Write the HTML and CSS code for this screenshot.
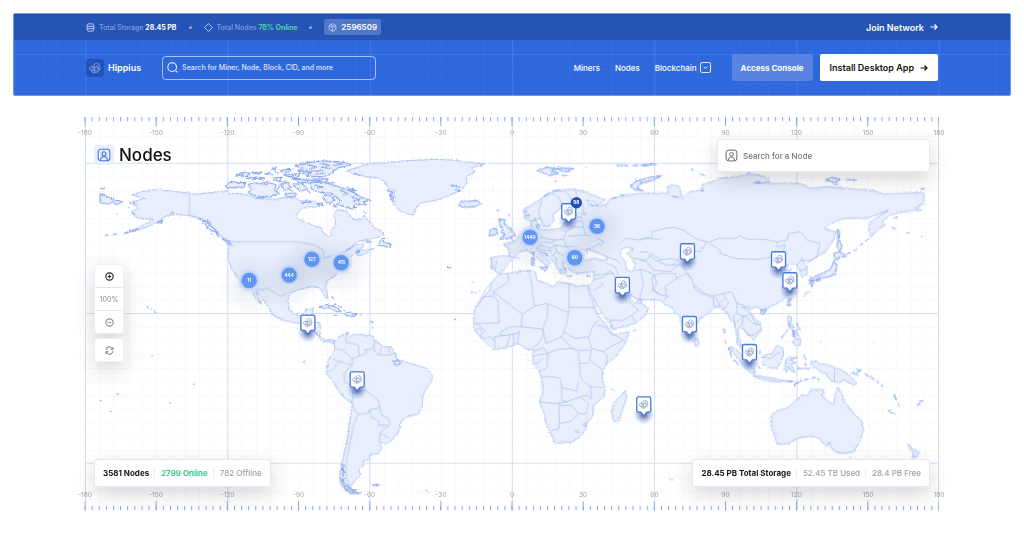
FILE: index.html
```html
<!DOCTYPE html>
<html lang="en">
<head>
  <meta charset="UTF-8" />
  <meta name="viewport" content="width=device-width, initial-scale=1" />
  <title>Hippius Nodes</title>
  <link rel="stylesheet" href="styles.css">
</head>
<body>
  <svg width="0" height="0" class="defs" aria-hidden="true">
    <symbol id="swirl" viewBox="0 0 24 24">
      <g fill="none" stroke="currentColor" stroke-width="1.6" stroke-linecap="round" stroke-linejoin="round">
        <path d="M2 11l4-2 5 1-1-5 5-3 5 3 2 6-1 5-4 4-6 2-5-2-1-4-3-1z" />
        <path d="M6 9l4 3 5-2 2-4M10 12l-4 3M10 12l2 5 5 1 3-4-5-4M7 17l5 0M12 17l-2 4M20 10l-3 3" />
      </g>
    </symbol>
    <symbol id="person" viewBox="0 0 24 24">
      <g fill="none" stroke="currentColor" stroke-width="1.8">
        <rect x="2" y="2" width="20" height="20" rx="5" />
        <circle cx="12" cy="10" r="3.5" />
        <path d="M6 21c0-8 12-8 12 0" />
      </g>
    </symbol>
    <symbol id="arrow" viewBox="0 0 16 16">
      <path d="M1 8h13M9 3l5 5-5 5" fill="none" stroke="currentColor" stroke-width="2.4" />
    </symbol>
  </svg>

  <header class="header">
    <svg class="header-grid" width="100%" height="100%" aria-hidden="true">
      <defs>
        <pattern id="hMinor" x="71.5" y="40" width="14.22" height="15" patternUnits="userSpaceOnUse">
          <path d="M0 .5H15M.5 0V15" stroke="#4478e8" stroke-opacity=".3" />
        </pattern>
        <pattern id="hMajor" x="71.5" y="40" width="142.2" height="150" patternUnits="userSpaceOnUse">
          <path d="M0 .5H143M.5 0V150" stroke="#4379ee" stroke-opacity=".8" />
        </pattern>
      </defs>
      <rect width="100%" height="100%" fill="url(#hMinor)" />
      <rect width="100%" height="100%" fill="url(#hMajor)" />
    </svg>
    <div class="topbar">
      <div class="stats">
        <svg class="icon" viewBox="0 0 16 16"><g fill="none" stroke="currentColor" stroke-width="1.6"><rect x="2" y="1.500" width="12" height="13" rx="3" /><path d="M2 6h12M2 10h12" /></g></svg>
        <span>Total Storage <b>28.45 PB</b></span>
        <i class="dot"></i>
        <svg class="icon" viewBox="0 0 16 16"><path d="M8 1l7 7-7 7-7-7z" fill="none" stroke="currentColor" stroke-width="1.6" stroke-linejoin="round" /></svg>
        <span>Total Nodes <b class="online">78% Online</b></span>
        <i class="dot"></i>
        <a href="#block" class="block">
          <svg class="icon" viewBox="0 0 16 16"><path d="M8 1l6 3.500v7L8 15l-6-3.500v-7zM2 4.500L8 8l6-3.500M8 8v7M5 3l6 3.500" fill="none" stroke="currentColor" stroke-width="1.4" /></svg>
          2596509
        </a>
      </div>
      <a href="#join" class="join">Join Network <svg class="arrow"><use href="#arrow" /></svg></a>
    </div>
    <div class="navbar">
      <a href="#home" class="brand"><span class="logo"><svg><use href="#swirl" /></svg></span>Hippius</a>
      <label class="search">
        <svg viewBox="0 0 16 16"><path d="M12.500 12.500L15 15" stroke="currentColor" stroke-width="1.500" /><circle cx="7.500" cy="7.500" r="6.300" fill="none" stroke="currentColor" stroke-width="1.500" /></svg>
        <input type="text" aria-label="Search" placeholder="Search for Miner, Node, Block, CID, and more">
      </label>
      <nav class="links">
        <a href="#miners">Miners</a>
        <a href="#nodes">Nodes</a>
        <a href="#blockchain" class="drop">Blockchain <svg viewBox="0 0 12 12"><rect x=".5" y=".5" width="11" height="11" rx="2" fill="none" stroke="currentColor" /><path d="M4 5l2 2 2-2" fill="none" stroke="currentColor" /></svg></a>
      </nav>
      <button class="btn console">Access Console</button>
      <button class="btn install">Install Desktop App <svg class="arrow"><use href="#arrow" /></svg></button>
    </div>
  </header>

  <main class="map">
    <svg class="world" viewBox="256 351 2560 1182" role="img" aria-label="World map of nodes">
      <defs>
        <pattern id="ticks" x="254.500" y="351" width="21.333" height="13" patternUnits="userSpaceOnUse">
          <path d="M1.500 0V13" stroke="#84a8f2" stroke-width="3" />
        </pattern>
        <pattern id="bigTicks" x="254.500" y="351" width="213.333" height="27" patternUnits="userSpaceOnUse">
          <path d="M1.500 0V27" stroke="#84a8f2" stroke-width="3" />
        </pattern>
        <pattern id="grid" x="256" y="490" width="42.666" height="40.900" patternUnits="userSpaceOnUse">
          <path d="M0 1.500H43M1.500 0V41" stroke="#f8f9fc" stroke-width="3" />
        </pattern>
        <filter id="coast" x="-2%" y="-2%" width="104%" height="104%">
          <feTurbulence type="fractalNoise" baseFrequency=".2" numOctaves="3" seed="4" />
          <feDisplacementMap in="SourceGraphic" scale="9" xChannelSelector="R" yChannelSelector="G" />
        </filter>
        <radialGradient id="haze"><stop offset="0" stop-color="#5b6f98" stop-opacity=".14" /><stop offset="1" stop-color="#5b6f98" stop-opacity="0" /></radialGradient>
        <radialGradient id="drop"><stop offset="0" stop-color="#1d2f66" stop-opacity=".85" /><stop offset=".55" stop-color="#5070b8" stop-opacity=".4" /><stop offset="1" stop-color="#6d92e8" stop-opacity="0" /></radialGradient>
        <g id="pin">
          <circle cy="30" r="31" fill="url(#drop)" />
          <path d="M-16 -22H16Q21 -22 21 -17V19Q21 24 16 24H9L0 35L-9 24H-16Q-21 24 -21 19V-17Q-21 -22 -16 -22Z" fill="#fff" stroke="#4579e3" stroke-width="4" />
          <use href="#swirl" x="-15" y="-15" width="30" height="30" color="#7d94c6" />
        </g>
        <g id="cluster">
          <circle cy="15" r="90" fill="url(#haze)" />
          <circle r="34" fill="#d3dff8" fill-opacity=".85" />
          <circle r="28" fill="#c0d2f6" />
          <circle r="23" fill="#6096ef" />
        </g>
      </defs>

      <rect x="256" y="378" width="2560" height="1128" fill="url(#grid)" />
      <path class="major" d="M257.500 351V1533M684 351V1533M1110 351V1533M1537 351V1533M1963 351V1533M2390 351V1533M2814.500 351V1533M256 490H2816M256 940H2816M256 1389H2816" />

      <g class="land" filter="url(#coast)">
        <!-- North America -->
        <path d="M395 585L425 575 470 568 530 575 590 582 640 577 680 572 690 580 735 582 770 595 825 598 860 590 885 595 922 608 945 602 960 615 945 622 922 620 900 630 888 648 900 660 922 668 945 678 965 682 972 700 985 710 995 705 992 690 1005 678 1008 660 1000 645 1012 628 1035 632 1048 642 1060 658 1085 658 1092 645 1105 660 1122 682 1145 693 1152 702 1135 712 1100 718 1072 725 1055 740 1035 755 1065 735 1092 730 1090 740 1072 750 1100 750 1122 745 1100 760 1075 768 1068 758 1055 768 1045 785 1035 795 1015 815 1008 825 985 840 976 858 982 880 985 895 975 890 965 870 955 862 935 860 910 865 892 870 870 880 865 900 867 925 880 940 900 947 912 942 918 928 940 925 937 940 932 965 960 968 962 990 960 1008 975 1020 992 1018 1005 1022 1002 1030 985 1023 970 1025 955 1010 945 995 920 980 900 970 870 965 850 960 820 945 810 928 795 905 778 885 763 860 770 880 782 905 785 913 772 900 758 880 752 862 730 850 710 830 695 805 684 770 687 735 665 715 690 725 660 705 640 680 610 660 580 648 550 645 520 643 495 650 475 665 445 680 405 693 375 700 410 685 450 665 460 658 425 655 405 650 395 635 415 625 405 615 388 608 410 602 435 595Z" />
        <!-- Greenland -->
        <path d="M1040 512L1080 500 1110 490 1160 488 1220 482 1300 478 1360 480 1400 486 1455 493 1415 503 1425 515 1400 530 1400 550 1385 570 1350 585 1310 600 1260 610 1248 625 1240 645 1215 640 1195 628 1180 610 1170 590 1185 575 1165 565 1158 550 1140 535 1100 530 1060 522Z" />
        <!-- Arctic Canada, Newfoundland and the Caribbean -->
        <g class="isles" transform="translate(660 450)">
          <path d="M15 108L35 94 55 98 78 97 72 112 40 112 25 115ZM85 103L112 98 140 104 150 98 168 104 165 122 178 130 150 140 110 140 85 127 95 117ZM270 98L300 94 340 105 365 113 400 125 420 140 452 150 430 156 440 165 405 162 400 178 375 170 350 163 362 152 335 130 300 127 275 117ZM225 48L260 38 310 33 365 35 395 44 350 55 335 70 310 80 260 78 275 68 235 64 250 55ZM215 83L250 88 325 86 320 96 240 98ZM308 138L330 134 346 150 330 160 318 155ZM182 102L205 96 212 112 196 122ZM220 103L245 100 265 116 240 124ZM290 162L306 158 310 168ZM195 130L230 130 225 140 200 140ZM245 158L260 150 275 156Z" />
          <path d="M48 74L75 66 90 70 80 80ZM95 68L125 66 118 73ZM82 85L110 80 102 90ZM118 82L135 84 130 90ZM135 72L150 68 158 74ZM160 84L186 82 180 92 162 90ZM180 62L210 55 212 64 196 70ZM190 75L220 72 215 82ZM155 55L170 53 165 60ZM220 72L240 70 236 80ZM250 45L240 40 270 36ZM130 96L145 94 138 100ZM475 286L484 268 492 262 490 275 512 282 512 292 495 288ZM440 272L452 274 444 278ZM412 300L420 305 408 310Z" />
          <path d="M298 470L320 463 345 470 366 484 350 485 330 474 305 474ZM372 492L382 486 412 493 400 499 385 497ZM336 440L342 446M344 458L348 464M358 468L366 472M455 512L458 520M458 528L456 535M420 494L428 494M370 480L376 482M340 495L352 497M681 352L692 353M702 507L708 509" />
          <path d="M262 44L290 50 270 56M300 40L330 46 305 52 335 56M255 62L290 64 310 60M240 70L262 73M285 72L312 70M228 88L270 92 300 90M345 38L370 42 340 48M380 112L410 122 385 120 412 134M395 140L420 150 400 152M360 120L385 132 370 135M285 105L310 112 290 114M340 160L352 172 338 168M430 182L438 190M400 168L412 175M60 68L72 76M100 84L125 88M165 66L178 70M196 60L222 58M205 78L232 84M175 96L200 92M110 145L135 142M500 120L520 128 508 134 524 142 512 148 526 154M400 70L420 76M230 60L250 60M690 105L720 112M705 118L720 122M180 108L172 120M210 118L222 128M262 120L272 130M320 100L345 98" />
        </g>
        <!-- Aleutians and Pacific -->
        <g class="isles" transform="translate(210 315)">
          <path d="M90 266L115 276 135 285 160 290 140 298 128 290 118 298 92 292ZM92 250L106 252M105 391L118 389M130 388L142 386M140 328L143 330M265 350L280 345 275 355ZM394 345L410 350 420 365M405 355L418 372M418 372L440 382 446 395M430 368L448 388M422 385L428 388M462 403L482 418M175 307L180 309M165 384L185 377 205 372M385 340L402 348 398 356M410 345L424 358M420 360L436 374M440 388L450 398M455 398L470 408M478 412L488 422M300 325L312 322M188 288L200 298M185 322L196 330" />
          <path d="M230 606L236 608M241 610L247 613M253 616L262 625M244 752L248 753M140 865L147 867M90 886L94 888M298 892L303 894M370 837L374 838M122 918L126 919" />
        </g>
        <!-- South America -->
        <g transform="translate(870 930)">
          <path d="M132 95L150 80 170 68 178 80 195 72 225 75 250 78 255 92 285 110 305 110 315 128 320 148 345 155 380 165 410 175 427 195 425 215 405 240 398 262 397 290 385 312 355 318 332 335 330 358 305 390 290 402 272 395 268 400 277 415 265 430 240 433 240 448 218 452 222 465 205 480 213 495 195 510 180 530 190 545 215 548 185 552 165 540 150 520 150 490 158 450 165 420 172 390 178 340 185 300 187 280 165 265 148 245 130 215 110 190 112 170 115 150 128 130 135 115Z" />
          <path class="isles" d="M308 152L325 150 333 160 318 165ZM248 525L268 522 262 528ZM405 541L418 546M38 154L46 157M170 65L178 72M155 460L160 500M150 500L165 520 180 530M152 510L170 540 195 550M165 460L158 475M175 532L205 550M154 475L166 485 156 495M150 505L162 508 156 518M160 528L176 526 172 540M180 540L198 538" />
        </g>
        <!-- Africa and Madagascar -->
        <g transform="translate(1380 780)">
          <path d="M118 42L145 40 175 35 205 30 225 35 232 60 265 72 280 80 295 65 325 70 355 78 382 75 388 100 400 130 413 165 430 185 450 210 455 225 480 220 508 215 495 250 470 285 440 310 428 330 427 360 435 385 432 410 400 435 398 470 380 485 378 505 360 530 335 545 285 550 275 525 258 490 250 455 238 425 250 390 245 355 235 330 220 310 218 285 222 270 195 265 178 250 140 262 100 268 80 250 60 230 42 205 42 170 45 140 65 115 90 90 95 65Z" />
          <path d="M495 390L500 410 485 455 475 485 460 482 455 455 462 425 480 410ZM33 96L40 98M45 97L52 98M58 92L62 94M36 64L42 66M202 298L206 300M520 210L528 211M450 385L456 388M462 390L466 392M2 183L4 185" />
        </g>
        <!-- Eurasia -->
        <path d="M1475 805L1473 772 1500 768 1528 768 1525 745 1510 732 1535 728 1555 712 1580 700 1595 688 1592 665 1605 655 1612 670 1615 688 1645 690 1680 685 1692 672 1702 655 1715 648 1725 655 1750 645 1758 640 1725 642 1700 638 1698 620 1685 610 1678 628 1658 642 1662 662 1645 680 1628 678 1620 655 1595 665 1575 655 1570 630 1595 615 1625 595 1655 578 1690 568 1725 568 1755 575 1790 590 1815 600 1790 615 1765 610 1775 618 1820 615 1825 600 1855 590 1880 585 1920 580 1980 580 2005 580 2000 562 2020 555 2038 560 2045 595 2070 575 2110 570 2105 555 2135 545 2160 535 2210 530 2255 522 2295 530 2310 545 2265 550 2350 550 2400 550 2430 565 2480 560 2540 565 2580 568 2620 572 2645 582 2700 580 2770 578 2770 610 2745 625 2765 630 2710 635 2670 645 2645 665 2655 675 2630 690 2612 712 2605 685 2610 665 2635 650 2665 630 2640 640 2600 655 2530 655 2490 670 2472 685 2505 695 2500 720 2475 755 2450 770 2425 785 2405 780 2420 800 2420 825 2405 832 2398 810 2390 795 2375 790 2355 800 2350 810 2375 808 2360 822 2375 850 2370 880 2350 900 2320 915 2290 930 2265 920 2245 930 2260 950 2280 970 2284 993 2260 1020 2252 1010 2238 995 2220 980 2213 990 2215 1015 2225 1035 2240 1062 2230 1055 2212 1030 2208 1000 2202 965 2190 960 2183 940 2170 930 2163 915 2140 925 2130 935 2100 955 2085 980 2078 1010 2066 1018 2045 980 2038 945 2025 940 2015 920 1995 915 1980 900 1945 898 1922 900 1905 895 1885 878 1890 895 1905 910 1920 892 1925 910 1945 925 1935 945 1905 970 1870 980 1838 988 1830 975 1810 945 1790 915 1772 880 1765 860 1780 840 1783 815 1750 818 1725 820 1705 805 1700 790 1712 778 1705 780 1690 795 1700 820 1680 820 1665 790 1645 770 1630 750 1610 742 1625 765 1650 785 1642 800 1625 785 1595 760 1580 750 1560 755 1545 768 1520 795 1510 812 1495 820Z" />
        <!-- European islands and inland seas -->
        <g transform="translate(1380 450)">
          <path class="isles" d="M118 210L135 208 132 220 150 235 165 255 150 265 120 267 135 252 122 245 130 238 118 225ZM90 240L108 235 112 252 88 258ZM-5 165L5 153 20 155 50 152 62 160 45 170 10 172ZM230 60L260 52 290 56 272 62 295 70 268 77 250 68ZM290 54L340 55 320 66 300 62ZM510 108L530 92 570 82 605 76 575 92 540 100 530 115 550 122 525 120ZM216 322L222 324 221 346 214 344ZM217 308L221 306 220 316ZM240 352L262 350 256 362ZM320 378L336 377M378 380L392 376M470 47L505 46M515 48L535 46M545 48L590 43M305 76L322 77M283 93L290 94M108 182L118 182M146 192L148 200M98 118L100 119M455 145L470 142M480 132L490 136M228 226L236 222 240 230 230 234ZM120 205L116 215M374 52L380 53M192 180L202 186M196 196L208 198M250 138L270 128M275 122L300 120M310 352L318 360M300 355L306 366M240 302L262 318M210 222L216 232" />
          <path class="sea" d="M350 325L348 305 368 298 382 308 378 296 405 305 440 320 438 332 400 325 370 332ZM480 300L500 290 520 297 500 310 516 325 526 345 515 365 498 358 496 335 482 318ZM380 150L405 157 408 168 388 162Z" />
        </g>
        <!-- Far East islands -->
        <g class="isles" transform="translate(1920 450)">
          <path d="M590 240L598 245 596 265 605 290 598 306 590 288 594 265ZM580 310L596 305 618 318 600 320 585 330ZM582 332L590 345 586 372 560 382 540 383 520 392 510 385 545 370 570 358ZM506 390L520 394 515 410ZM530 388L542 386 532 394ZM444 450L452 444 448 468 441 462ZM362 480L378 477 370 492 364 490ZM555 90L575 82 600 88 585 98ZM615 88L650 90M580 104L595 103M620 312L632 306M640 302L650 297M660 285L668 280M674 272L688 266M505 428L508 426M492 440L496 438M755 232L766 236M800 248L808 250M842 258L848 260M760 202L770 204M178 72L195 75M155 60L160 58M840 118L852 116M320 72L330 66M340 98L360 94M0 46L38 42M180 115L188 125M95 138L115 142" />
        </g>
        <!-- South East Asia and Oceania -->
        <g transform="translate(1980 870)">
          <path d="M105 145L115 150 116 165 106 166 102 155ZM208 170L225 175 245 195 262 215 282 235 285 250 270 248 245 220 225 195ZM280 255L310 260 345 265 370 272 360 275 315 270 285 262ZM306 200L318 195 335 190 350 165 368 175 370 195 362 215 350 235 325 232 308 222ZM376 208L385 203 412 202 390 210 408 218 392 222 403 245 392 243 385 228 380 248 374 240ZM382 78L394 80 392 98 402 110 395 112 384 100ZM398 118L412 122 408 132ZM405 148L422 145 420 165 408 168 396 156ZM362 145L384 118ZM452 215L470 212 478 222 495 222 520 230 545 240 568 255 590 280 580 285 550 268 538 278 515 272 500 260 498 250 480 245 470 235 452 225ZM570 248L590 247 600 237 592 255Z" />
          <path d="M335 372L350 362 385 352 400 335 415 325 425 312 440 318 452 298 480 298 492 300 485 318 510 338 520 340 525 312 533 290 545 310 552 335 565 350 585 375 605 392 609 420 600 450 580 485 550 490 525 485 510 470 505 455 500 468 485 455 480 445 450 438 410 445 385 460 350 462 345 440 335 415 332 400ZM742 460L755 475 778 485 770 500 755 502 760 490 750 478ZM568 502L574 500" />
          <path class="isles" d="M372 272L400 273M400 285L425 270M378 272L395 275M410 280L400 288M428 270L445 266M430 195L438 210M432 220L440 226M410 235L450 235M472 262L474 270M455 265L465 262M588 236L602 244M614 248L625 260M628 258L642 270M650 268L655 280M660 284L668 290M700 312L708 330M714 340L716 350M684 360L702 372M775 335L790 330M770 344L780 340M385 98L390 115M396 118L400 140M410 100L418 118M412 130L416 140M400 122L405 145M300 180L298 190M190 115L194 132M194 150L198 162M205 170L215 200M222 208L235 225M295 228L298 235M480 156L482 158M548 113L550 115M640 160L642 161M28 566L40 568M442 6L434 12" />
        </g>
      </g>

      <g class="borders">
        <path d="M568 575V648L610 655 640 680M690 725H885L920 730 945 735 970 750 972 775 1000 765 1035 755M752 862L790 870 800 862 840 888 860 882M900 970L912 962 918 945 937 945M932 965L945 985M995 1018L1005 1022" />
        <path transform="translate(870 930)" d="M170 70L168 95 205 105 208 138 187 145 188 165M128 145L150 155 188 165M118 185L130 175 148 155M188 165L162 190 163 215 185 225 190 250 187 280M190 250L225 240 240 250 265 270 270 292 238 300 235 310 205 312 195 300 187 280M270 292L275 315 297 325 298 345 270 368 268 398M270 368L300 385M238 300L245 320 268 335 265 345 297 345M205 312L192 340 180 400 170 450 168 500 180 530M208 138L230 130 225 120 250 115 255 92M250 115L262 133 275 135 300 135 315 128M275 108L270 135M297 110L300 132M75 65L90 78M187 145L160 120 135 115" />
        <path transform="translate(1380 780)" d="M145 40V65L100 95V108L70 110 48 145M100 95L187 163 222 138 260 130 325 157M205 30L215 70 222 138M100 108L113 120 118 188 48 190M187 163L183 200 150 200 122 215 122 228M262 132V170L248 205 258 250M327 70V142L325 157 320 190 312 215 345 235 385 230M327 142H405M183 200L250 207 250 225 235 250 215 265M412 180L395 205 385 235 395 265 430 275 450 260 490 240 450 215 435 200 412 195M440 310V285L430 275M395 265L388 300 428 330M258 250L305 230 312 215M305 230L335 265 355 270 388 270M222 275L250 262 262 280 220 287M262 280V320L238 335M262 280L290 268 335 265M355 272L358 310 360 340 365 360 385 375 392 380 427 382M360 310L388 308M245 350L280 350 300 355 305 382 350 392 355 365M238 425L290 430 320 425 345 415 380 405 395 415 390 375M305 382V420L320 425M298 430L297 505 275 510M297 490L330 485 355 460 335 435 300 435M355 460L378 462 385 430 365 415M160 220V258M150 222L140 260M135 225L103 230 105 265M178 210L172 250M122 228L180 218M48 190L75 210 60 225M60 225L75 235 90 230 103 240M50 205L65 208M345 512A8 7 0 0 0 358 516 8 7 0 0 0 345 512M370 490L378 488 378 498 370 497ZM400 60L430 50 450 30 470 60 500 95M400 90L430 75 420 65M450 175L458 208M450 180L490 180 515 165 525 185M515 165L535 150 505 125M545 130L530 128M220 310L235 308 250 295M90 70L60 115" />
        <path transform="translate(1380 450)" d="M95 355V325M110 330L105 362M148 318L180 325M175 262L195 280 205 292 198 300M215 245L205 270M235 240L245 262 230 275 245 285M245 262L280 270 310 268 318 245 300 238M310 268L320 290 355 290M318 245L340 230 370 232 375 255 325 258M370 232L365 205 345 195M375 255L400 258 430 275 420 290M205 292L225 285 250 288 270 295M245 275L275 278 290 268M270 295L285 285 320 290 345 310M285 285L290 305 315 320 345 322M290 305L275 320M315 320L305 345M285 320L290 335M245 150L235 185 240 205M275 130L295 140 305 165M310 120L330 140 335 165 340 185M345 118L355 150 370 165 370 190M480 280L495 265 540 270 560 265 600 268M440 320L470 330 480 340M440 340L465 350 475 375M520 325L560 330 575 310 600 330M520 362L545 358 580 372 590 400 575 420 598 430M403 375L460 370M380 300L420 280M320 195L345 205M322 210L365 215M318 225L340 230M230 275L215 285M250 300L275 302" />
        <path transform="translate(1920 450)" d="M0 268L35 260 35 245 75 235 100 232 130 240 165 265 200 275 240 300 240 310 285 325 350 328 400 320 430 300 435 285 410 290 412 275 440 270 445 250 480 245 500 270 540 280 530 320 505 335M210 275L235 265 285 265 300 257 320 268 375 268 412 275M200 275L180 305 150 300 155 330 125 345 135 360M0 305L20 305 45 330 80 345 120 345M0 330L20 335 40 360 90 365 120 340M0 360L10 400 0 440M35 380L38 410 50 430 85 440M35 380L60 370 105 370 110 385 75 410 80 440 65 455M110 385L135 370 155 385 160 405 195 430 220 438 250 430 255 445 235 460 225 440M160 405L165 420 220 445M135 360L155 385M235 460L240 475 220 465 220 440M255 445L265 455 250 480M250 430L275 425 290 460 310 465 320 480M290 460L290 490 310 500 330 490 350 525M310 500L305 525M290 490L280 500 285 530M470 345L485 325M478 362L498 355M300 472L330 470M55 330L90 325 115 330 95 345" />
        <path transform="translate(1980 870)" d="M308 200L330 205 345 195 358 185M523 232V275M230 95L250 75 280 100 300 105M250 115L262 135 280 135 300 120M240 165L250 165" />
      </g>

      <!-- degree scale -->
      <rect x="254" y="351" width="2562" height="13" fill="url(#ticks)" />
      <rect x="254" y="351" width="2562" height="27" fill="url(#bigTicks)" />
      <g transform="matrix(1 0 0 -1 0 1881)">
        <rect x="254" y="351" width="2562" height="13" fill="url(#ticks)" />
        <rect x="254" y="351" width="2562" height="27" fill="url(#bigTicks)" />
      </g>
      <g class="degrees">
        <text x="256" y="405">-180</text><text x="469" y="405">-150</text><text x="683" y="405">-120</text><text x="896" y="405">-90</text><text x="1109" y="405">-60</text><text x="1323" y="405">-30</text><text x="1536" y="405">0</text><text x="1749" y="405">30</text><text x="1963" y="405">60</text><text x="2176" y="405">90</text><text x="2389" y="405">120</text><text x="2603" y="405">150</text><text x="2816" y="405">180</text>
        <text x="256" y="1490">-180</text><text x="469" y="1490">-150</text><text x="683" y="1490">-120</text><text x="896" y="1490">-90</text><text x="1109" y="1490">-60</text><text x="1323" y="1490">-30</text><text x="1536" y="1490">0</text><text x="1749" y="1490">30</text><text x="1963" y="1490">60</text><text x="2176" y="1490">90</text><text x="2389" y="1490">120</text><text x="2603" y="1490">150</text><text x="2816" y="1490">180</text>
      </g>

      <g class="clusters">
        <g transform="translate(748 841)"><use href="#cluster" /><text y="5">11</text></g>
        <g transform="translate(868 825)"><use href="#cluster" /><text y="5">444</text></g>
        <g transform="translate(936 778)"><use href="#cluster" /><text y="5">127</text></g>
        <g transform="translate(1024 788)"><use href="#cluster" /><text y="5">411</text></g>
        <g transform="translate(1590 712)"><use href="#cluster" /><text y="5">1440</text></g>
        <g transform="translate(1791 679)"><use href="#cluster" /><text y="5">36</text></g>
        <g transform="translate(1724 773)"><use href="#cluster" /><text y="5">60</text></g>
      </g>
      <use href="#pin" x="924" y="967" />
      <use href="#pin" x="1072" y="1137" />
      <use href="#pin" x="1706" y="633" />
      <use href="#pin" x="1867" y="854" />
      <use href="#pin" x="2062" y="753" />
      <use href="#pin" x="2335" y="777" />
      <use href="#pin" x="2369" y="840" />
      <use href="#pin" x="2068" y="971" />
      <use href="#pin" x="2248" y="1055" />
      <use href="#pin" x="1931" y="1212" />
      <g class="clusters" transform="translate(1729 608)"><circle r="17" fill="#1f50b9" /><text y="5">98</text></g>
    </svg>

    <h1 class="title"><span class="title-icon"><svg><use href="#person" /></svg></span>Nodes</h1>

    <label class="card node-search">
      <svg><use href="#person" /></svg>
      <input type="text" aria-label="Search for a Node" placeholder="Search for a Node">
    </label>

    <div class="zoom">
      <div class="card zoom-group">
        <button class="in" aria-label="Zoom in"><svg viewBox="0 0 16 16"><circle cx="8" cy="8" r="6.500" /><path d="M5 8h6M8 5v6" /></svg></button>
        <span>100%</span>
        <button aria-label="Zoom out"><svg viewBox="0 0 16 16"><circle cx="8" cy="8" r="6.500" /><path d="M5 8h6" /></svg></button>
      </div>
      <div class="card zoom-group">
        <button aria-label="Reset"><svg viewBox="0 0 16 16"><path d="M2 7a6 6 0 0 1 11-3l1 2M14 2v4h-4M14 9a6 6 0 0 1-11 3l-1-2M2 14v-4h4" /></svg></button>
      </div>
    </div>

    <div class="card summary left">
      <strong>3581 Nodes</strong>
      <span class="green">2799 Online</span>
      <span>782 Offline</span>
    </div>
    <div class="card summary right">
      <strong>28.45 PB Total Storage</strong>
      <span>52.45 TB Used</span>
      <span>28.4 PB Free</span>
    </div>
  </main>
</body>
</html>
```

FILE: styles.css
```css
* {
  box-sizing: border-box;
}

body {
  margin: 0;
  padding: 13px;
  background: #fff;
  font-family: Inter, "Liberation Sans", sans-serif;
  font-size: 8px;
  color: #111;
}

a {
  color: inherit;
  text-decoration: none;
}

button,
input {
  font: inherit;
  color: inherit;
  border: none;
  background: none;
  padding: 0;
}

.defs {
  position: absolute;
}

/* header */
.header {
  position: relative;
  background: #2f67dd;
  border: 1px solid #6e97ee;
  border-radius: 2px;
  color: #fff;
  overflow: hidden;
}

.header-grid {
  position: absolute;
  inset: 0;
}

.topbar,
.navbar {
  position: relative;
  display: flex;
  align-items: center;
  padding: 0 72px;
}

.topbar {
  height: 26px;
  justify-content: space-between;
  background: rgba(37, 82, 178, 0.9);
}

.stats {
  display: flex;
  align-items: center;
  gap: 4px;
  color: #7f9ddb;
  font-size: 7px;
  font-weight: 500;
}

.stats b {
  font-weight: 700;
  color: #fff;
}

.stats .online {
  color: #58dfa2;
  font-weight: 600;
}

.icon {
  width: 9px;
  height: 9px;
  color: #c6d6f7;
}

.dot {
  width: 3px;
  height: 3px;
  margin: 0 8px;
  border-radius: 50%;
  background: #8aa9e8;
}

.block {
  display: flex;
  align-items: center;
  gap: 4px;
  height: 16px;
  padding: 0 4px;
  border-radius: 2px;
  background: #5078c8;
  color: #fff;
  font-size: 8px;
  font-weight: 600;
}

.arrow {
  width: 8px;
  height: 8px;
}

.join {
  display: flex;
  align-items: center;
  gap: 6px;
  font-size: 9px;
  font-weight: 600;
}

.navbar {
  height: 55px;
}

.brand {
  display: flex;
  align-items: center;
  gap: 4px;
  font-size: 9px;
  font-weight: 600;
}

.logo {
  display: grid;
  place-items: center;
  width: 18px;
  height: 18px;
  border-radius: 3px;
  background: #2353b9;
  color: #86a8ec;
}

.logo svg {
  width: 12px;
  height: 12px;
}

.search {
  display: flex;
  align-items: center;
  gap: 4px;
  width: 214px;
  height: 24px;
  margin-left: 21px;
  padding: 0 4px;
  border: 1px solid #a9c2f6;
  border-radius: 4px;
}

.search svg {
  width: 11px;
  height: 11px;
  flex: none;
}

.search input,
.node-search input {
  flex: 1;
  min-width: 0;
  outline: none;
}

.search input {
  font-size: 7px;
  font-weight: 500;
}

.search input::placeholder {
  color: #dbe5fb;
}

.links {
  display: flex;
  align-items: center;
  gap: 15px;
  margin-left: auto;
  font-weight: 500;
}

.drop {
  display: flex;
  align-items: center;
  gap: 3px;
}

.drop svg {
  width: 11px;
  height: 11px;
}

.btn {
  height: 27px;
  border-radius: 2px;
  cursor: pointer;
}

.console {
  margin-left: 21px;
  padding: 0 9px;
  background: #5983e3;
  font-weight: 700;
}

.install {
  display: flex;
  align-items: center;
  gap: 6px;
  margin-left: 7px;
  padding: 0 10px;
  background: #fff;
  color: #111;
  font-size: 9px;
  font-weight: 600;
}

/* map */
.map {
  position: relative;
  margin: 21px 72px 0;
}

.world {
  display: block;
  width: 100%;
  overflow: visible;
}

.major {
  stroke: #d5dff7;
  stroke-width: 3;
}

.land {
  fill: #e8eefb;
  stroke: #8eacee;
  stroke-width: 2;
  stroke-linejoin: round;
}

.land .isles {
  stroke: #82a3ee;
  stroke-width: 3;
}

.land .sea {
  fill: #fff;
}

.borders {
  fill: none;
  stroke: #a5bcf1;
  stroke-width: 2;
  stroke-linejoin: round;
}

.degrees {
  font-size: 20px;
  fill: #a3a3a3;
  text-anchor: middle;
}

.clusters {
  font-size: 14px;
  font-weight: 700;
  fill: #fff;
  text-anchor: middle;
}

.card {
  background: #fff;
  border: 1px solid #e8e8ea;
  border-radius: 3px;
  box-shadow: 0 7px 20px rgba(30, 35, 50, 0.18);
}

.title {
  position: absolute;
  top: 26px;
  left: 9px;
  display: flex;
  align-items: center;
  gap: 5px;
  margin: 0;
  font-size: 17px;
  line-height: 24px;
  font-weight: 500;
}

.title-icon {
  display: grid;
  place-items: center;
  width: 20px;
  height: 20px;
  border-radius: 3px;
  background: #e9f0fd;
  color: #3f73e0;
}

.title-icon svg {
  width: 14px;
  height: 14px;
}

.node-search {
  position: absolute;
  top: 22px;
  right: 9px;
  display: flex;
  align-items: center;
  gap: 5px;
  width: 213px;
  height: 33px;
  padding: 0 7px;
  color: #666;
}

.node-search svg {
  width: 13px;
  height: 13px;
}

.node-search input {
  font-weight: 500;
}

.node-search input::placeholder {
  color: #757575;
}

.zoom {
  position: absolute;
  top: 147px;
  left: 9px;
  display: flex;
  flex-direction: column;
  gap: 4px;
}

.zoom-group {
  width: 30px;
  overflow: hidden;
}

.card.zoom-group {
  border-color: #f0f0f2;
}

.zoom-group > * {
  display: grid;
  place-items: center;
  width: 100%;
  height: 22px;
  color: #8f8f8f;
  font-size: 7px;
}

.zoom-group > * + * {
  height: 23px;
  border-top: 1px solid #e5e7ec;
}

.zoom-group .in {
  color: #222;
}

.zoom-group svg {
  width: 9px;
  height: 9px;
  fill: none;
  stroke: currentColor;
  stroke-width: 2;
}

.summary {
  position: absolute;
  bottom: 24px;
  display: flex;
  align-items: center;
  height: 28px;
  padding: 0 8px;
  color: #a0a0a0;
  font-weight: 500;
}

.summary strong {
  color: #161616;
  font-weight: 700;
}

.summary > * + * {
  margin-left: 5px;
  padding-left: 6px;
  border-left: 1px solid #ececec;
}

.summary .green {
  color: #22c97c;
  font-weight: 600;
}

.left {
  left: 9px;
}

.right {
  right: 9px;
}
```
